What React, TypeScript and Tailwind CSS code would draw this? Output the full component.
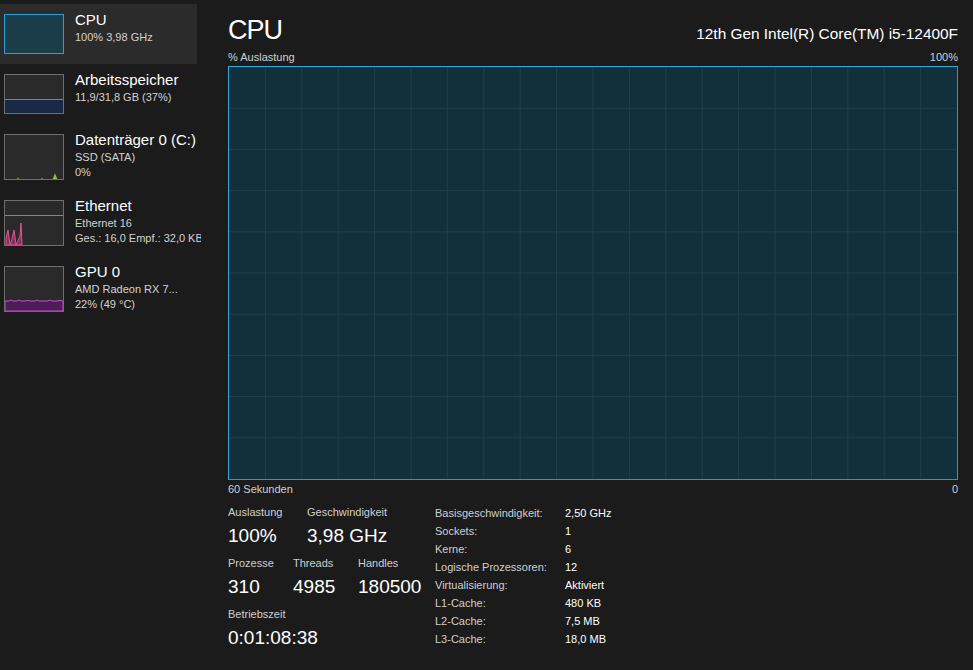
import React from 'react';

interface SideItemProps {
    title: string;
    lines: string[];
    graph: React.ReactNode;
    active?: boolean;
    tall?: boolean;
}

interface StatProps {
    label: string;
    value: string;
    width: string;
}

const SideItem = ({ title, lines, graph, active, tall }: SideItemProps) => (
    <div className={`flex w-[197px] py-[10px] ${active ? 'bg-[#2b2b2b]' : ''}`}>
        <div className={`ml-[4px] w-[60px] shrink-0 ${tall ? 'h-[46px]' : 'h-[40px]'}`}>{graph}</div>
        <div className="ml-[11px] -mt-[4px] whitespace-nowrap">
            <div className="text-[15px] leading-[20px] text-white">{title}</div>
            {lines.map((l) => (
                <div key={l} className="text-[11px] leading-[15px] text-[#d2d2d2]">{l}</div>
            ))}
        </div>
    </div>
);

const Stat = ({ label, value, width }: StatProps) => (
    <div className={width}>
        <div className="text-[11px] leading-[16px] text-[#cfcfcf]">{label}</div>
        <div className="mt-[3px] text-[19px] leading-[26px] text-white">{value}</div>
    </div>
);

// kleine Vorschaugrafiken in der Seitenleiste
const CpuThumb = () => <div className="h-full w-full border border-[#2b9fd6] bg-[#1b3e4a]" />;

const MemThumb = () => (
    <div className="flex h-full w-full flex-col justify-end border border-[#6e6e6e] bg-[#2a2a2a]">
        <div className="h-[14px] border-t border-[#4a8fd9] bg-[#1a2a46]" />
    </div>
);

const DiskThumb = () => (
    <div className="h-full w-full border border-[#6e6e6e] bg-[#2a2a2a]">
        <svg width="58" height="44" viewBox="0 0 58 44" className="block">
            <path d="M12 44 L13 42 L14 44 Z" fill="#7fae2a" />
            <path d="M36 44 L37 42.5 L38 44 Z" fill="#7fae2a" />
            <path d="M48 44 L50 39 L52 44 Z" fill="#8fc030" stroke="#9fd040" strokeWidth="0.5" />
        </svg>
    </div>
);

const EthThumb = () => (
    <div className="h-full w-full border border-[#6e6e6e] bg-[#2a2a2a]">
        <svg width="58" height="44" viewBox="0 0 58 44" className="block">
            <line x1="0" y1="14.5" x2="58" y2="14.5" stroke="#e0568c" strokeWidth="1.2" />
            <path
                d="M1 44 L1 37 L3 29 L5 44 L7 38 L9 29 L11 44 L13 40 L15 35 L16 22 L17 44 Z"
                fill="#8a2f57"
                stroke="#e0568c"
                strokeWidth="1"
            />
        </svg>
    </div>
);

const GpuThumb = () => (
    <div className="h-full w-full border border-[#6e6e6e] bg-[#2a2a2a]">
        <svg width="58" height="44" viewBox="0 0 58 44" className="block">
            <path
                d="M0 44 L0 34 L4 34 L6 33 L8 34 L12 34 L14 33 L16 34 L20 34 L22 33.5 L26 34 L30 34 L32 33 L34 34 L38 34 L42 34 L45 33 L47 34 L52 34 L55 33.5 L58 34 L58 44 Z"
                fill="#4e1d57"
                stroke="#c452d3"
                strokeWidth="1"
            />
        </svg>
    </div>
);

const Chart = () => {
    const cols = Array.from({ length: 19 }, (_, i) => ((i + 1) * 728) / 20);
    const rows = Array.from({ length: 9 }, (_, i) => ((i + 1) * 412) / 10);
    return (
        <div className="mt-[2px] h-[414px] w-full border border-[#7d7d7d] border-t-[#2ea8de] border-l-[#2ea8de] bg-[#11303b]">
            <svg width="100%" height="100%" viewBox="0 0 728 412" preserveAspectRatio="none" className="block">
                {cols.map((x) => (
                    <line key={`c${x}`} x1={x} y1="0" x2={x} y2="412" stroke="#1f404c" strokeWidth="1" />
                ))}
                {rows.map((y) => (
                    <line key={`r${y}`} x1="0" y1={y} x2="728" y2={y} stroke="#1f404c" strokeWidth="1" />
                ))}
            </svg>
        </div>
    );
};

const details: [string, string][] = [
    ['Basisgeschwindigkeit:', '2,50 GHz'],
    ['Sockets:', '1'],
    ['Kerne:', '6'],
    ['Logische Prozessoren:', '12'],
    ['Virtualisierung:', 'Aktiviert'],
    ['L1-Cache:', '480 KB'],
    ['L2-Cache:', '7,5 MB'],
    ['L3-Cache:', '18,0 MB'],
];

const App = () => {
    return (
        <div className="flex h-[670px] w-[973px] overflow-hidden bg-[#1b1b1b] font-['Liberation_Sans',Arial,sans-serif]">
            <aside className="w-[201px] shrink-0 overflow-hidden pt-[4px]">
                <SideItem active title="CPU" lines={['100%  3,98 GHz']} graph={<CpuThumb />} />
                <SideItem title="Arbeitsspeicher" lines={['11,9/31,8 GB (37%)']} graph={<MemThumb />} />
                <SideItem tall title="Datenträger 0 (C:)" lines={['SSD (SATA)', '0%']} graph={<DiskThumb />} />
                <SideItem tall title="Ethernet" lines={['Ethernet 16', 'Ges.: 16,0  Empf.: 32,0 KBit/s']} graph={<EthThumb />} />
                <SideItem tall title="GPU 0" lines={['AMD Radeon RX 7...', '22%  (49 °C)']} graph={<GpuThumb />} />
            </aside>

            <main className="flex-1 pl-[27px] pr-[15px] pt-[13px]">
                <div className="flex items-baseline justify-between">
                    <h1 className="text-[27px] leading-[34px] tracking-[-1px] text-white">CPU</h1>
                    <span className="text-[15.4px] text-white">12th Gen Intel(R) Core(TM) i5-12400F</span>
                </div>

                <div className="mt-[3px] flex justify-between text-[11px] leading-[14px] text-[#cfcfcf]">
                    <span>% Auslastung</span>
                    <span>100%</span>
                </div>
                <Chart />
                <div className="mt-[2px] flex justify-between text-[11px] leading-[14px] text-[#cfcfcf]">
                    <span>60 Sekunden</span>
                    <span>0</span>
                </div>

                <div className="mt-[8px] flex">
                    <div className="w-[207px] shrink-0">
                        <div className="flex">
                            <Stat label="Auslastung" value="100%" width="w-[79px]" />
                            <Stat label="Geschwindigkeit" value="3,98 GHz" width="w-[120px]" />
                        </div>
                        <div className="mt-[6px] flex">
                            <Stat label="Prozesse" value="310" width="w-[65px]" />
                            <Stat label="Threads" value="4985" width="w-[65px]" />
                            <Stat label="Handles" value="180500" width="w-[70px]" />
                        </div>
                        <div className="mt-[6px]">
                            <Stat label="Betriebszeit" value="0:01:08:38" width="w-[150px]" />
                        </div>
                    </div>
                    <div>
                        {details.map(([k, v]) => (
                            <div key={k} className="flex text-[11px] leading-[18px]">
                                <span className="w-[130px] text-[#cfcfcf]">{k}</span>
                                <span className="text-white">{v}</span>
                            </div>
                        ))}
                    </div>
                </div>
            </main>
        </div>
    );
};

export default App;
